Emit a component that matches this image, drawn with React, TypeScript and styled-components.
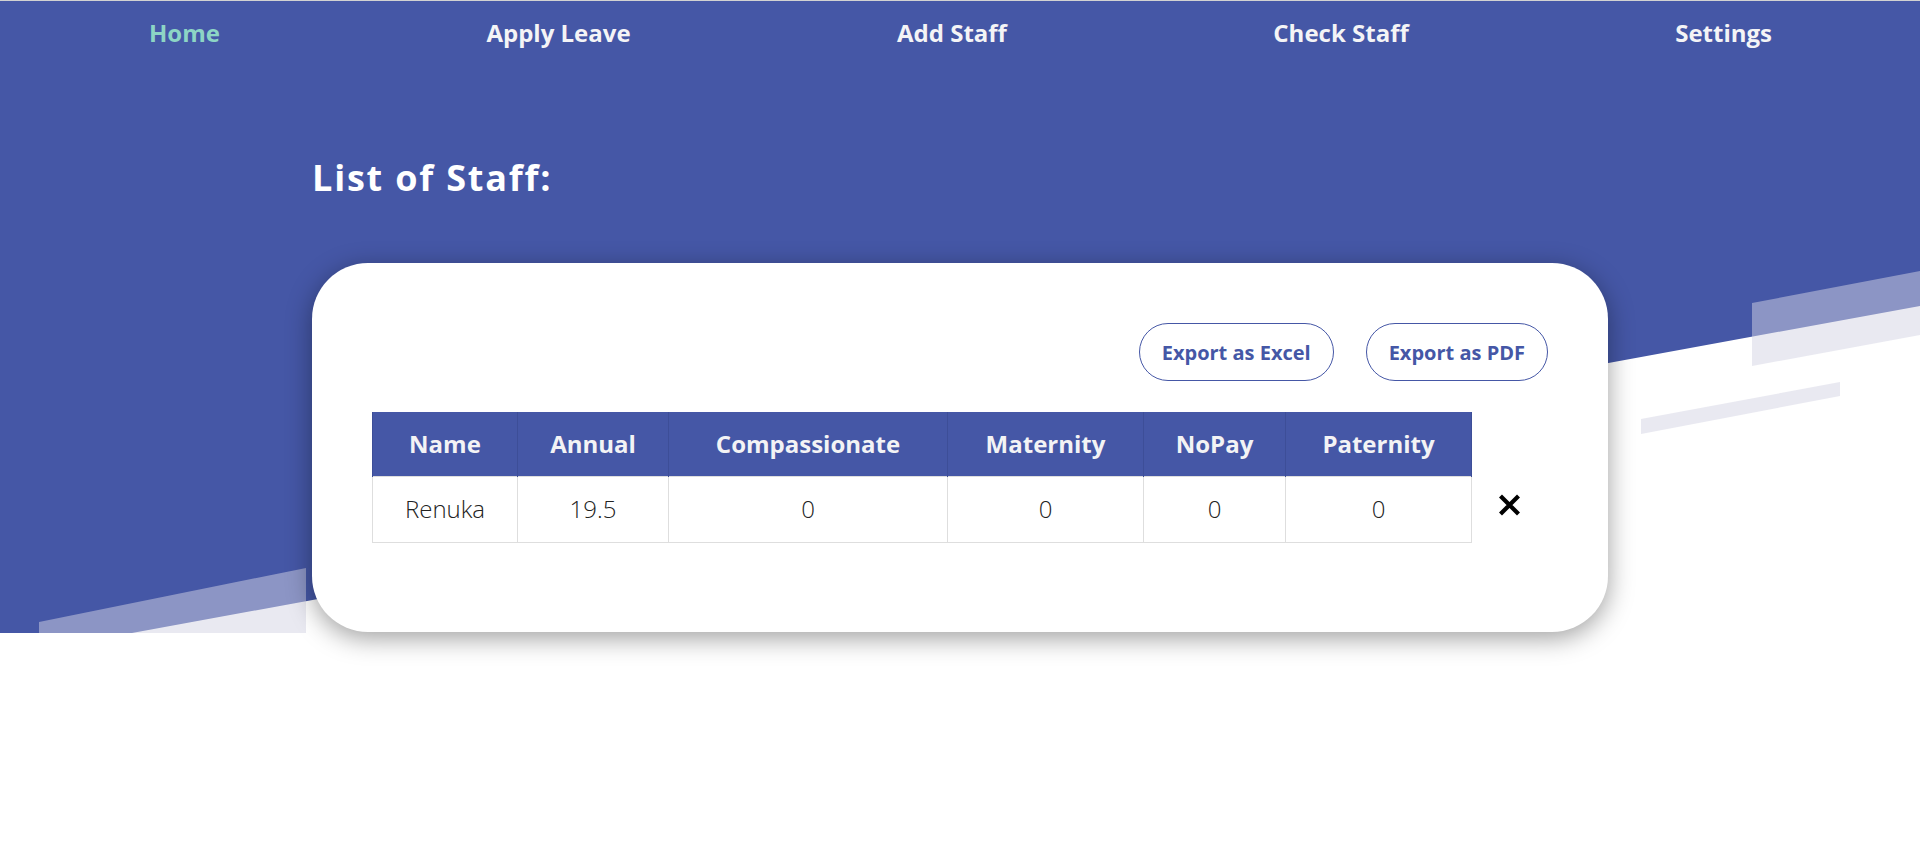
import React from "react";
import styled, { createGlobalStyle } from "styled-components";

const BLUE = "#4557a6";

const GlobalStyle = createGlobalStyle`
  html, body { margin: 0; padding: 0; background: #ffffff; }
  body { font-family: "Open Sans", "Noto Sans", "DejaVu Sans", sans-serif; }
  *, *::before, *::after { box-sizing: border-box; }
`;

const Page = styled.div`
  min-height: 854px;
  background: #ffffff;
  border-top: 1px solid #d2d2d2;
`;

const Hero = styled.section`
  position: relative;
  height: 632px;
`;

const HeroBackdrop = styled.svg`
  position: absolute;
  inset: 0;
  width: 100%;
  height: 100%;
  z-index: 0;
  display: block;
`;

const Nav = styled.nav`
  position: relative;
  z-index: 1;
  display: flex;
  justify-content: space-between;
  padding: 16px 148px 0 149px;
`;

const NavLink = styled.a<{ $active?: boolean }>`
  font-size: 24px;
  line-height: 32px;
  font-weight: 700;
  color: ${(p) => (p.$active ? "#8dd5c5" : "#f4f4f6")};
  text-decoration: none;
  cursor: pointer;
`;

const Content = styled.main`
  position: relative;
  z-index: 1;
  width: 1296px;
  margin: 0 auto;
`;

const Title = styled.h1`
  margin: 107px 0 0;
  font-size: 36px;
  line-height: 43px;
  font-weight: 700;
  letter-spacing: 1.8px;
  color: #ffffff;
`;

const Card = styled.div`
  margin-top: 64px;
  background: #ffffff;
  border-radius: 56px;
  box-shadow: 0 6px 26px rgba(0, 0, 0, 0.38);
  padding: 60px 60px 89px;
`;

const Actions = styled.div`
  display: flex;
  justify-content: flex-end;
  gap: 32px;
  margin-bottom: 31px;
`;

const ExportButton = styled.button`
  height: 58px;
  padding: 0 22px;
  border: 1px solid ${BLUE};
  border-radius: 29px;
  background: #ffffff;
  color: ${BLUE};
  font-family: inherit;
  font-size: 20px;
  font-weight: 700;
  cursor: pointer;
`;

const Table = styled.table`
  width: 100%;
  table-layout: fixed;
  border-collapse: collapse;
`;

const HeadCell = styled.th`
  height: 64px;
  padding: 0;
  background: ${BLUE};
  color: #f3f3f5;
  font-size: 24px;
  line-height: 34px;
  font-weight: 700;
  text-align: center;
  border-left: 1px solid #3d4e98;
  border-right: 1px solid #3d4e98;
`;

const EmptyHead = styled.th`
  padding: 0;
  background: transparent;
`;

const Cell = styled.td`
  height: 66px;
  padding: 0;
  border: 1px solid #dedede;
  color: #222222;
  font-size: 24px;
  line-height: 34px;
  font-weight: 300;
  text-align: center;
`;

const ActionCell = styled.td`
  padding: 0;
  text-align: center;
  vertical-align: middle;
`;

const RemoveButton = styled.button`
  display: inline-flex;
  align-items: center;
  justify-content: center;
  width: 24px;
  height: 24px;
  padding: 0;
  margin-top: -4px;
  border: none;
  background: transparent;
  cursor: pointer;
`;

const columns = [
  { key: "name", label: "Name", width: 145 },
  { key: "annual", label: "Annual", width: 151 },
  { key: "compassionate", label: "Compassionate", width: 279 },
  { key: "maternity", label: "Maternity", width: 196 },
  { key: "nopay", label: "NoPay", width: 142 },
  { key: "paternity", label: "Paternity", width: 186 },
];

const staff = [
  { name: "Renuka", annual: "19.5", compassionate: "0", maternity: "0", nopay: "0", paternity: "0" },
];

const navItems = ["Home", "Apply Leave", "Add Staff", "Check Staff", "Settings"];

const Backdrop = () => (
  <HeroBackdrop viewBox="0 0 1920 632" preserveAspectRatio="none" aria-hidden="true">
    <polygon points="0,0 1920,0 1920,305 132,632 0,632" fill={BLUE} />
    <polygon points="39,621 306,567 306,640 39,640" fill="rgba(212,212,228,0.5)" />
    <polygon points="1752,302 1920,270 1920,334 1752,365" fill="rgba(212,212,228,0.5)" />
    <polygon points="1641,418 1840,381 1840,395 1641,433" fill="rgba(212,212,228,0.5)" />
  </HeroBackdrop>
);

const CloseIcon = () => (
  <svg width="23" height="22" viewBox="0 0 23 22" aria-hidden="true">
    <path d="M2.5 2 L20.5 20 M20.5 2 L2.5 20" stroke="#000" strokeWidth="4.2" fill="none" />
  </svg>
);

export default function App() {
  return (
    <>
      <GlobalStyle />
      <Page>
        <Hero>
          <Backdrop />
          <Nav>
            {navItems.map((item, i) => (
              <NavLink key={item} $active={i === 0}>
                {item}
              </NavLink>
            ))}
          </Nav>
          <Content>
            <Title>List of Staff:</Title>
            <Card>
              <Actions>
                <ExportButton>Export as Excel</ExportButton>
                <ExportButton>Export as PDF</ExportButton>
              </Actions>
              <Table>
                <colgroup>
                  {columns.map((c) => (
                    <col key={c.key} style={{ width: c.width }} />
                  ))}
                  <col />
                </colgroup>
                <thead>
                  <tr>
                    {columns.map((c) => (
                      <HeadCell key={c.key}>{c.label}</HeadCell>
                    ))}
                    <EmptyHead />
                  </tr>
                </thead>
                <tbody>
                  {staff.map((s) => (
                    <tr key={s.name}>
                      {columns.map((c) => (
                        <Cell key={c.key}>{(s as Record<string, string>)[c.key]}</Cell>
                      ))}
                      <ActionCell>
                        <RemoveButton aria-label="Remove">
                          <CloseIcon />
                        </RemoveButton>
                      </ActionCell>
                    </tr>
                  ))}
                </tbody>
              </Table>
            </Card>
          </Content>
        </Hero>
      </Page>
    </>
  );
}
